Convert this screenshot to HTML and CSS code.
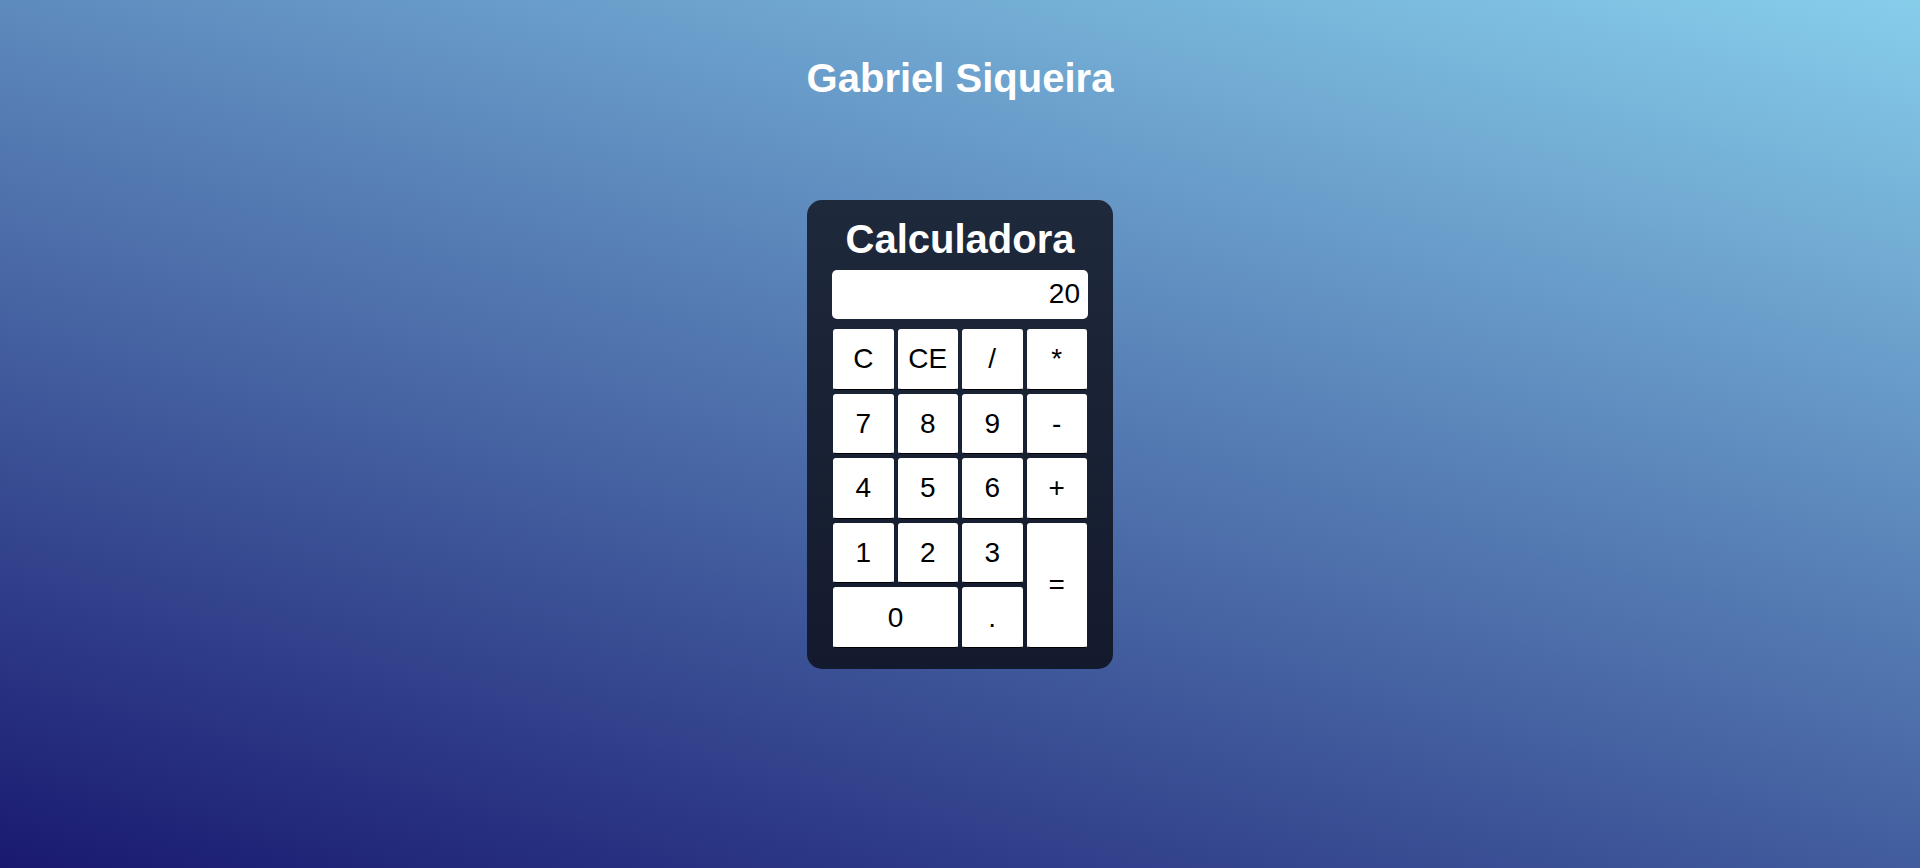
FILE: index.html
```html
<!DOCTYPE html>
<html lang="pt-BR">
<head>
<meta charset="UTF-8">
<title>Calculadora</title>
<link rel="stylesheet" href="styles.css">
</head>
<body>
  <header class="page-header">
    <h1 class="author">Gabriel Siqueira</h1>
  </header>
  <main class="calculator">
    <h2 class="calc-title">Calculadora</h2>
    <div class="display">20</div>
    <div class="keys">
      <button class="key">C</button>
      <button class="key">CE</button>
      <button class="key">/</button>
      <button class="key">*</button>
      <button class="key">7</button>
      <button class="key">8</button>
      <button class="key">9</button>
      <button class="key">-</button>
      <button class="key">4</button>
      <button class="key">5</button>
      <button class="key">6</button>
      <button class="key">+</button>
      <button class="key">1</button>
      <button class="key">2</button>
      <button class="key">3</button>
      <button class="key key-equals">=</button>
      <button class="key key-zero">0</button>
      <button class="key">.</button>
    </div>
  </main>
</body>
</html>
```

FILE: styles.css
```css
* {
  box-sizing: border-box;
}

html, body {
  margin: 0;
  padding: 0;
}

body {
  min-height: 100vh;
  font-family: "Liberation Sans", Arial, sans-serif;
  background: linear-gradient(15deg, #191970 0%, #87ceeb 100%);
  display: flex;
  flex-direction: column;
  align-items: center;
}

.page-header {
  padding-top: 55px;
}

.author {
  margin: 0;
  font-size: 40px;
  line-height: 46px;
  font-weight: 700;
  color: #ffffff;
  text-align: center;
}

.calculator {
  margin-top: 99px;
  width: 306px;
  padding: 16px 25px 21px 25px;
  border-radius: 15px;
  background: linear-gradient(180deg, #1e293b 0%, #141a2d 100%);
  display: flex;
  flex-direction: column;
}

.calc-title {
  margin: 0;
  font-size: 40px;
  line-height: 46px;
  font-weight: 700;
  color: #ffffff;
  text-align: center;
}

.display {
  margin-top: 8px;
  height: 49px;
  line-height: 47px;
  padding-right: 8px;
  background: #ffffff;
  border-radius: 5px;
  text-align: right;
  font-size: 28px;
  color: #000000;
}

.keys {
  margin: 10px 1px 0 1px;
  height: 319px;
  display: grid;
  grid-template-columns: repeat(4, 1fr);
  grid-template-rows: repeat(5, 1fr);
  gap: 4px;
}

.key {
  font-family: "Liberation Sans", Arial, sans-serif;
  font-size: 28px;
  color: #000000;
  background: #ffffff;
  border: 1px solid #ffffff;
  border-bottom-color: #000000;
  border-radius: 3px;
  padding: 0;
  margin: 0;
}

.key-equals {
  grid-column: 4;
  grid-row: 4 / span 2;
}

.key-zero {
  grid-column: 1 / span 2;
}
```
